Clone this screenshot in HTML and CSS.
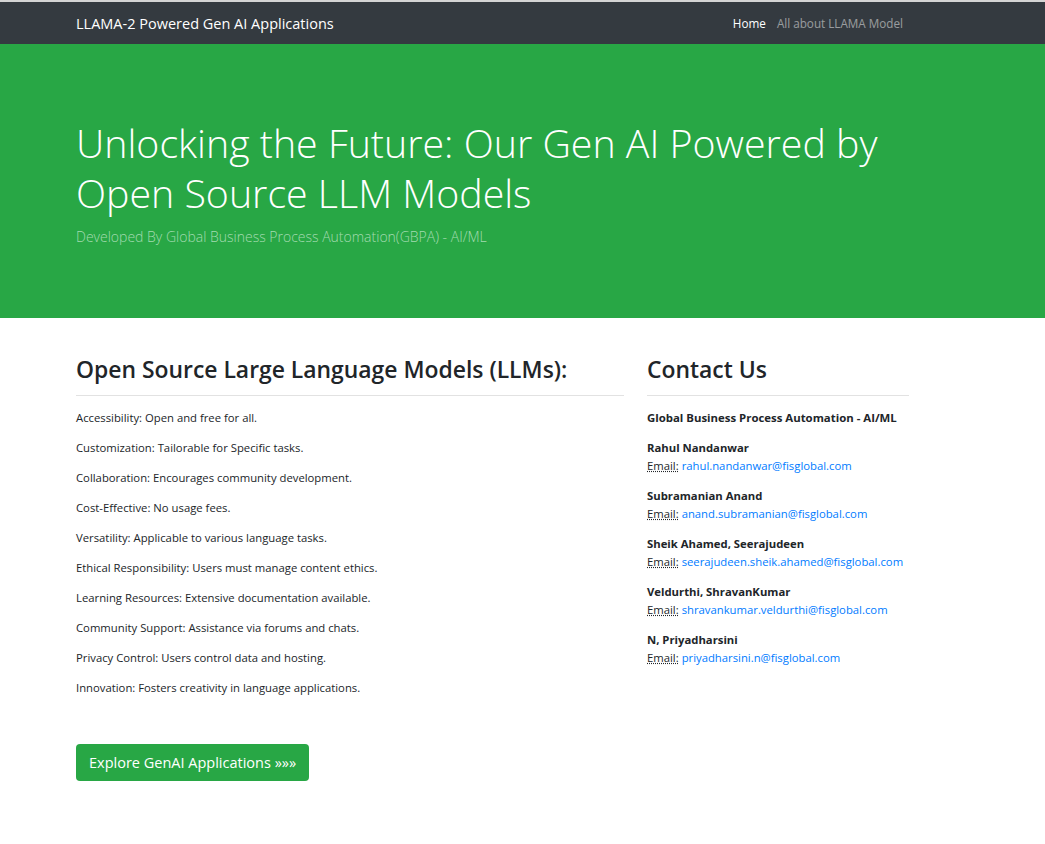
FILE: index.html
```html
<!DOCTYPE html>
<html lang="en">
<head>
<meta charset="utf-8">
<title>LLAMA-2 Powered Gen AI Applications</title>
<link rel="stylesheet" href="styles.css">
</head>
<body>
<nav class="navbar">
  <div class="container nav-inner">
    <a class="brand" href="#">LLAMA-2 Powered Gen AI Applications</a>
    <ul class="nav-links">
      <li><a class="nav-link active" href="#">Home</a></li>
      <li><a class="nav-link" href="#">All about LLAMA Model</a></li>
    </ul>
  </div>
</nav>
<header class="hero">
  <div class="container">
    <h1 class="hero-title">Unlocking the Future: Our Gen AI Powered by Open Source LLM Models</h1>
    <p class="hero-sub">Developed By Global Business Process Automation(GBPA) - AI/ML</p>
  </div>
</header>
<main class="container content">
  <section class="col-main">
    <h2 class="section-title">Open Source Large Language Models (LLMs):</h2>
    <p class="item">Accessibility: Open and free for all.</p>
    <p class="item">Customization: Tailorable for Specific tasks.</p>
    <p class="item">Collaboration: Encourages community development.</p>
    <p class="item">Cost-Effective: No usage fees.</p>
    <p class="item">Versatility: Applicable to various language tasks.</p>
    <p class="item">Ethical Responsibility: Users must manage content ethics.</p>
    <p class="item">Learning Resources: Extensive documentation available.</p>
    <p class="item">Community Support: Assistance via forums and chats.</p>
    <p class="item">Privacy Control: Users control data and hosting.</p>
    <p class="item">Innovation: Fosters creativity in language applications.</p>
    <a class="btn-success" href="#">Explore GenAI Applications »»»</a>
  </section>
  <aside class="col-side">
    <h2 class="section-title">Contact Us</h2>
    <p class="org">Global Business Process Automation - AI/ML</p>
    <address class="contact">
      <strong>Rahul Nandanwar</strong><br>
      <abbr title="Email">Email:</abbr> <a href="#">rahul.nandanwar@fisglobal.com</a>
    </address>
    <address class="contact">
      <strong>Subramanian Anand</strong><br>
      <abbr title="Email">Email:</abbr> <a href="#">anand.subramanian@fisglobal.com</a>
    </address>
    <address class="contact">
      <strong>Sheik Ahamed, Seerajudeen</strong><br>
      <abbr title="Email">Email:</abbr> <a href="#">seerajudeen.sheik.ahamed@fisglobal.com</a>
    </address>
    <address class="contact">
      <strong>Veldurthi, ShravanKumar</strong><br>
      <abbr title="Email">Email:</abbr> <a href="#">shravankumar.veldurthi@fisglobal.com</a>
    </address>
    <address class="contact">
      <strong>N, Priyadharsini</strong><br>
      <abbr title="Email">Email:</abbr> <a href="#">priyadharsini.n@fisglobal.com</a>
    </address>
  </aside>
</main>
</body>
</html>
```
FILE: styles.css
```css
* { box-sizing: border-box; }
html, body { margin: 0; padding: 0; }
body {
  font-family: "Open Sans", "Noto Sans", Arial, sans-serif;
  font-size: 11.3px;
  color: #212529;
  background: #fff;
  border-top: 2px solid #d4d4d4;
}
a { text-decoration: none; }
.container {
  width: 832px;
  margin-left: 76px;
}
.navbar {
  background: #343a40;
  height: 42px;
  display: flex;
  align-items: center;
}
.nav-inner {
  display: flex;
  align-items: center;
  justify-content: space-between;
}
.brand {
  color: #fff;
  font-size: 14.5px;
}
.nav-links {
  list-style: none;
  margin: 0 5px 0 0;
  padding: 0;
  display: flex;
  gap: 11px;
}
.nav-link {
  color: rgba(255,255,255,.5);
  font-size: 11.7px;
}
.nav-link.active { color: #fff; }
.hero {
  background: #28a745;
  height: 274px;
  padding-top: 74px;
}
.hero-title {
  margin: 0;
  color: #fff;
  font-weight: 300;
  font-size: 39.3px;
  line-height: 50px;
}
.hero-sub {
  margin: 9px 0 0;
  color: #a3dbb0;
  font-weight: 300;
  font-size: 14px;
}
.content {
  display: grid;
  grid-template-columns: 548px 262px;
  column-gap: 23px;
  padding-top: 36px;
}
.section-title {
  margin: 0 0 13px;
  padding-bottom: 10px;
  border-bottom: 1px solid #e2e2e2;
  font-size: 22.9px;
  font-weight: 600;
  line-height: 31px;
  color: #212529;
}
.item {
  margin: 0 0 12px;
  line-height: 18px;
}
.btn-success {
  display: inline-block;
  margin-top: 35px;
  background: #28a745;
  color: #fff;
  font-size: 14.5px;
  line-height: 21px;
  padding: 8px 13px;
  border-radius: 4px;
}
.org {
  margin: 0 0 12px;
  font-weight: 700;
  font-size: 11.4px;
  line-height: 18px;
  white-space: nowrap;
}
.contact {
  font-style: normal;
  line-height: 18px;
  margin: 0 0 12px;
  white-space: nowrap;
}
.contact strong { font-weight: 700; }
.contact abbr {
  text-decoration: underline dotted;
  cursor: help;
}
.contact a { color: #007bff; }
```
